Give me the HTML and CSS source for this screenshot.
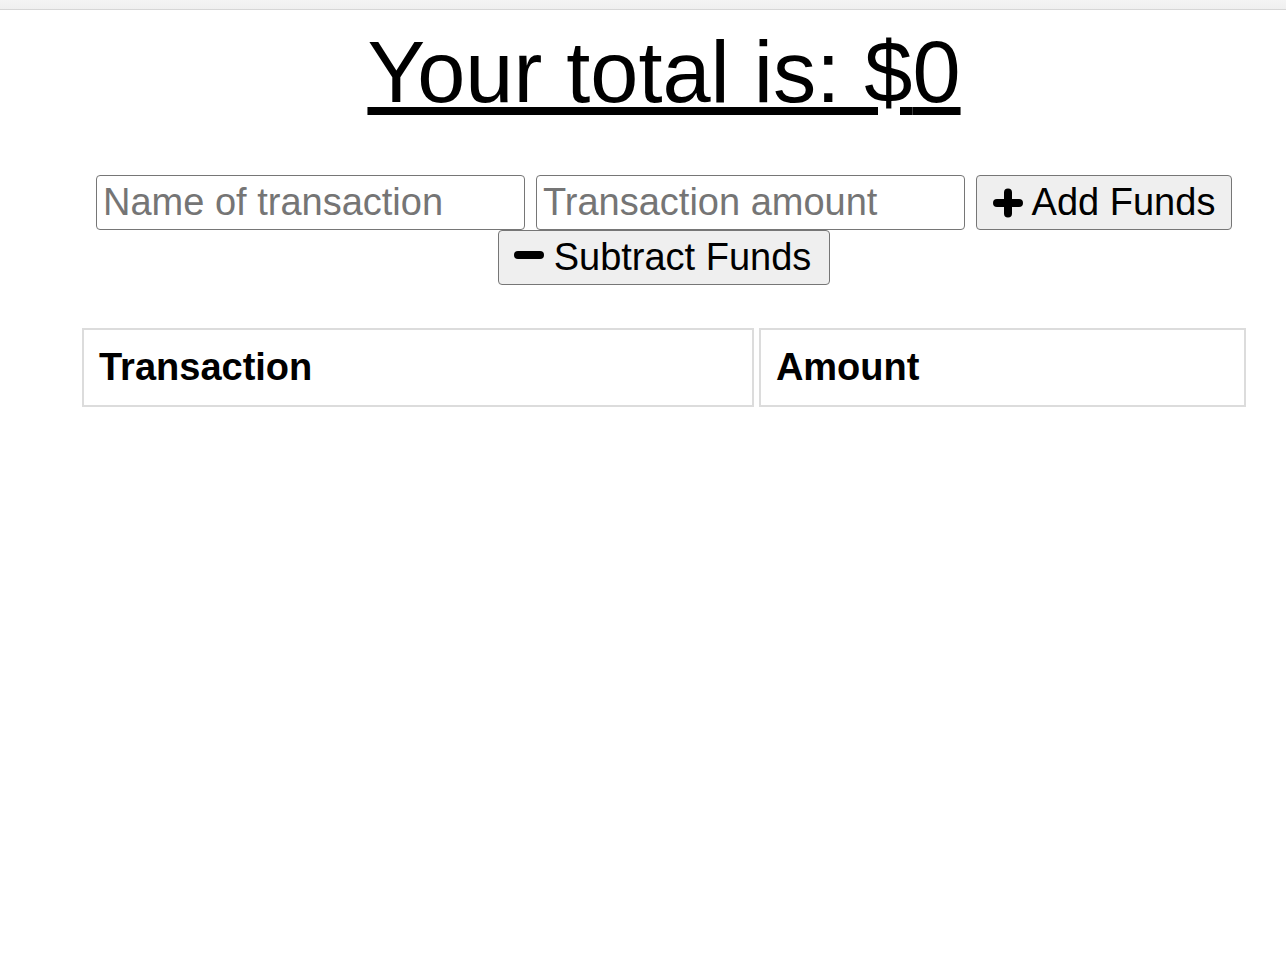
FILE: index.html
```html
<!DOCTYPE html>
<html lang="en">
<head>
<meta charset="utf-8">
<title>Budget Tracker</title>
<link rel="stylesheet" href="styles.css">
</head>
<body>
<div class="topbar"></div>
<main class="page">
  <h1 class="total">Your total is: $<span id="total">0</span></h1>
  <form class="form">
    <input class="field" type="text" placeholder="Name of transaction">
    <input class="field" type="number" placeholder="Transaction amount">
    <button class="btn btn-add" type="button">
      <svg class="icon" width="30" height="30" viewBox="0 0 30 30" aria-hidden="true"><path d="M15 4.5V25.5M4 15H26" stroke="#000" stroke-width="8" stroke-linecap="round" fill="none"/></svg>
      <span>Add Funds</span>
    </button>
    <button class="btn btn-sub" type="button">
      <svg class="icon icon-minus" width="30" height="30" viewBox="0 0 30 30" aria-hidden="true"><path d="M4 15H26" stroke="#000" stroke-width="8" stroke-linecap="round" fill="none"/></svg>
      <span>Subtract Funds</span>
    </button>
  </form>
  <table class="ledger">
    <thead>
      <tr>
        <th class="col-name">Transaction</th>
        <th class="col-amount">Amount</th>
      </tr>
    </thead>
    <tbody></tbody>
  </table>
</main>
</body>
</html>
```
FILE: styles.css
```css
html, body {
  margin: 0;
  padding: 0;
  background: #ffffff;
}

body {
  font-family: "Liberation Sans", Arial, sans-serif;
  color: #000;
}

.topbar {
  height: 9px;
  background: linear-gradient(#f4f4f4, #efefef);
  border-bottom: 1px solid #d6d6d6;
}

.page {
  margin-left: 42px;
  width: 1244px;
}

.total {
  margin: 13px 0 0;
  font-size: 86.5px;
  font-weight: normal;
  line-height: normal;
  text-align: center;
  text-decoration: underline;
}

.form {
  margin: 53px 0 0;
  display: flex;
  flex-wrap: wrap;
  justify-content: center;
  column-gap: 11px;
  row-gap: 0;
}

.field {
  box-sizing: border-box;
  width: 429px;
  height: 55px;
  margin: 0;
  padding: 0 6px;
  border: 1px solid #767676;
  border-radius: 4px;
  background: #fff;
  font-family: "Liberation Sans", Arial, sans-serif;
  font-size: 38px;
  color: #000;
  -moz-appearance: textfield;
}

.field::-webkit-outer-spin-button,
.field::-webkit-inner-spin-button {
  -webkit-appearance: none;
  margin: 0;
}

.field::placeholder {
  color: #757575;
}

.btn {
  box-sizing: border-box;
  height: 55px;
  margin: 0;
  padding: 0;
  display: inline-flex;
  align-items: center;
  justify-content: center;
  border: 1px solid #767676;
  border-radius: 4px;
  background: #efefef;
  font-family: "Liberation Sans", Arial, sans-serif;
  font-size: 38px;
  color: #000;
}

.btn-add {
  width: 256px;
  gap: 9px;
}

.btn-sub {
  width: 332px;
  gap: 10px;
  padding-right: 3px;
}

.icon {
  display: block;
  flex: none;
}

.icon-minus {
  margin-top: -6px;
}

.ledger {
  margin: 43px auto 0;
  width: 1174px;
  table-layout: fixed;
  border-collapse: separate;
  border-spacing: 5px 0;
}

.ledger th {
  padding: 16px 15px;
  border: 2px solid #dcdcdc;
  text-align: left;
  font-size: 38px;
  font-weight: bold;
  line-height: normal;
}

.col-name {
  width: 635px;
}

.col-amount {
  width: 451px;
}
```
